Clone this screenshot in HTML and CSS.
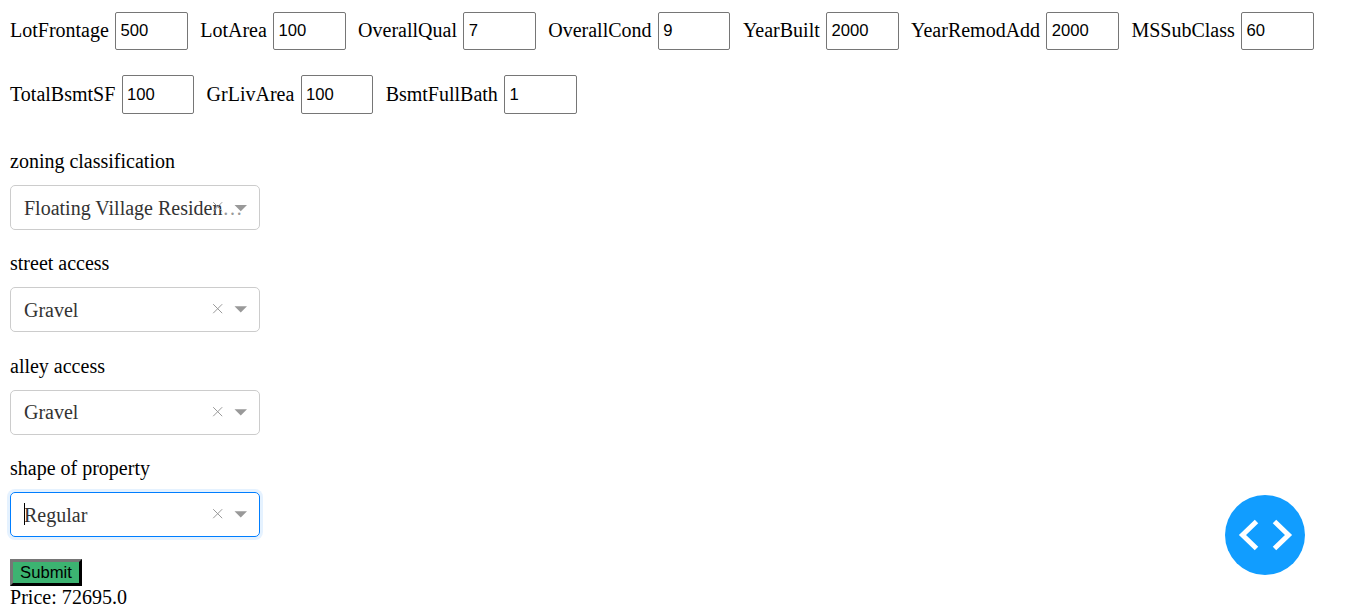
FILE: index.html
```html
<!DOCTYPE html>
<html lang="en">
<head>
<meta charset="utf-8">
<title>House price</title>
<link rel="stylesheet" href="styles.css">
</head>
<body>
<main class="page">
  <form class="fields">
    <div class="row row-first">
      <label class="field"><span class="name">LotFrontage</span><input class="num" value="500"></label>
      <label class="field"><span class="name">LotArea</span><input class="num" value="100"></label>
      <label class="field"><span class="name">OverallQual</span><input class="num" value="7"></label>
      <label class="field"><span class="name">OverallCond</span><input class="num" value="9"></label>
      <label class="field"><span class="name">YearBuilt</span><input class="num" value="2000"></label>
      <label class="field"><span class="name">YearRemodAdd</span><input class="num" value="2000"></label>
      <label class="field"><span class="name">MSSubClass</span><input class="num" value="60"></label>
    </div>
    <div class="row row-second">
      <label class="field"><span class="name">TotalBsmtSF</span><input class="num" value="100"></label>
      <label class="field"><span class="name">GrLivArea</span><input class="num" value="100"></label>
      <label class="field"><span class="name">BsmtFullBath</span><input class="num" value="1"></label>
    </div>
  </form>

  <section class="choices">
    <div class="choice">
      <div class="caption">zoning classification</div>
      <div class="select">
        <span class="value">Floating Village Residen<span class="more">…</span></span>
        <svg class="marks" width="36" height="12" viewBox="0 0 36 12"><path class="cross" d="M1.2 1.2l9 9M10.2 1.2l-9 9"/><path class="arrow" d="M22.5 4h12.5l-6.25 6.2z"/></svg>
      </div>
    </div>
    <div class="choice">
      <div class="caption">street access</div>
      <div class="select">
        <span class="value low">Gravel</span>
        <svg class="marks" width="36" height="12" viewBox="0 0 36 12"><path class="cross" d="M1.2 1.2l9 9M10.2 1.2l-9 9"/><path class="arrow" d="M22.5 3.2h12.5l-6.25 6.2z"/></svg>
      </div>
    </div>
    <div class="choice">
      <div class="caption">alley access</div>
      <div class="select">
        <span class="value">Gravel</span>
        <svg class="marks" width="36" height="12" viewBox="0 0 36 12"><path class="cross" d="M1.2 1.2l9 9M10.2 1.2l-9 9"/><path class="arrow" d="M22.5 3.2h12.5l-6.25 6.2z"/></svg>
      </div>
    </div>
    <div class="choice">
      <div class="caption">shape of property</div>
      <div class="select focused">
        <span class="caret"></span>
        <span class="value low">Regular</span>
        <svg class="marks" width="36" height="12" viewBox="0 0 36 12"><path class="cross" d="M1.2 1.2l9 9M10.2 1.2l-9 9"/><path class="arrow" d="M22.5 3.2h12.5l-6.25 6.2z"/></svg>
      </div>
    </div>
  </section>

  <button class="submit" type="button">Submit</button>
  <div class="price">Price: 72695.0</div>
</main>
<div class="debug">
  <svg width="80" height="80" viewBox="0 0 80 80"><path d="M31.5 26.5L17.5 40l14 13.5M49.5 26.5l14 13.5l-14 13.5"/></svg>
</div>
</body>
</html>
```
FILE: styles.css
```css
* { box-sizing: border-box; }
body {
  margin: 0;
  background: #fff;
  color: #000;
  font: 20px/23px "Liberation Serif", "Times New Roman", serif;
}
.page { height: 616px; padding: 12px 10px 0; overflow: hidden; }
.row { display: flex; gap: 12.5px; height: 38px; }
.row-first .name { padding-bottom: 2px; }
.row-second { height: 39px; margin-top: 25px; }
.field { display: flex; align-items: center; gap: 6.3px; white-space: nowrap; }
.num {
  width: 72.5px;
  height: 100%;
  margin: 0;
  padding: 0 4px 0 4.4px;
  border: 1px solid #767676;
  border-radius: 2px;
  background: #fff;
  color: #000;
  font: 16.667px "Liberation Sans", Arial, sans-serif;
}
.choices { margin-top: 36px; }
.choice { height: 102.3px; }
.caption { height: 35px; }
.select {
  position: relative;
  display: flex;
  align-items: center;
  width: 250px;
  height: 45px;
  padding: 0 13px;
  border: 1px solid #ccc;
  border-radius: 5px;
  color: #333;
}
.focused { border-color: #007eff; box-shadow: 0 0 0 3px rgba(0, 126, 255, 0.1); }
.value { padding-top: 1px; white-space: nowrap; }
.low { padding-top: 2px; }
.more { color: #999; }
.marks { position: absolute; top: 15px; left: 201px; }
.cross { fill: none; stroke: #999; stroke-width: 1; }
.arrow { fill: #999; }
.caret { position: absolute; top: 10px; left: 13px; width: 1px; height: 22px; background: #000; }
.submit {
  display: block;
  width: 72px;
  height: 27px;
  margin: 0;
  padding: 0;
  border: 3px outset #000;
  border-color: #767676 #212121 #212121 #767676;
  background: #3cb371;
  color: #000;
  font: 16.667px/20px "Liberation Sans", Arial, sans-serif;
}
.price { letter-spacing: 0.03px; }
.debug { position: fixed; right: 42px; bottom: 41px; width: 80px; height: 80px; border-radius: 50%; background: #119dff; }
.debug path { fill: none; stroke: #fff; stroke-width: 5; }
```
